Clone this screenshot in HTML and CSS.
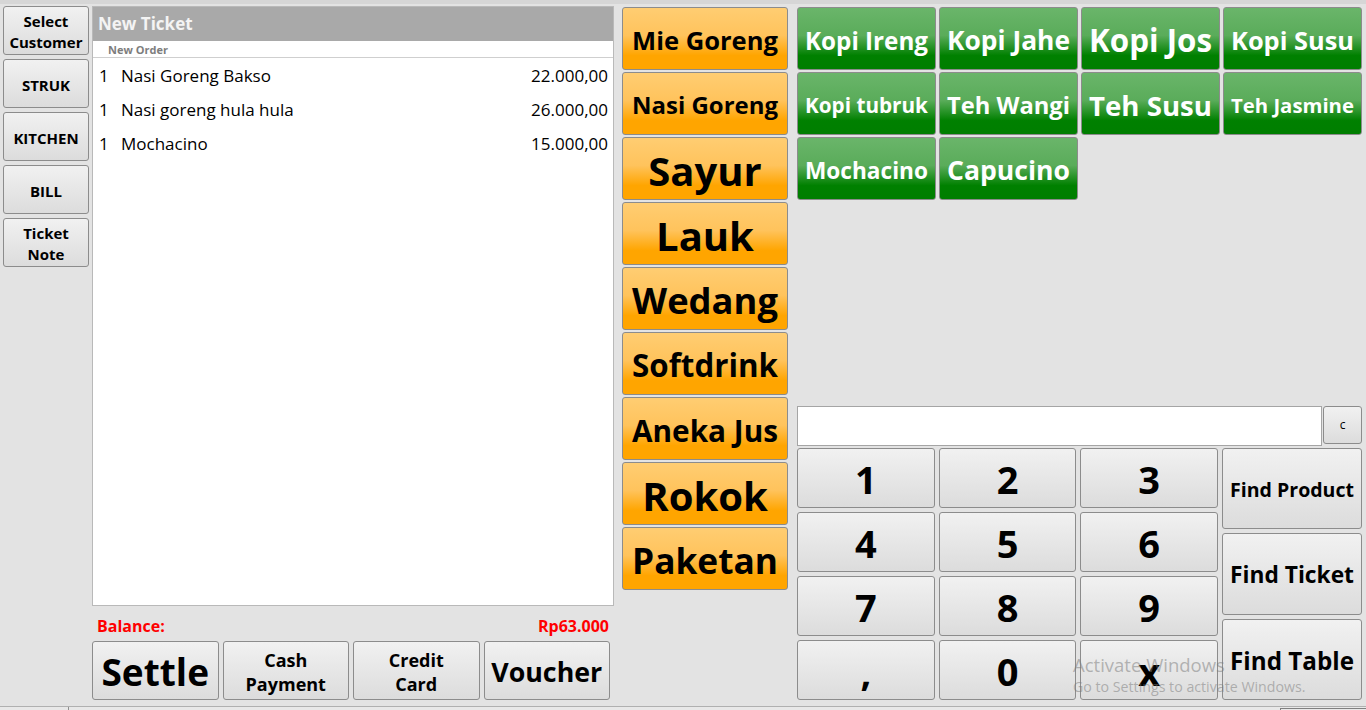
FILE: index.html
```html
<!DOCTYPE html>
<html lang="id">
<head>
<meta charset="utf-8">
<title>POS</title>
<link rel="stylesheet" href="styles.css">
</head>
<body>
<div class="topline"></div>
<div class="main">
  <aside class="side">
    <button class="btn side-btn">Select<br>Customer</button>
    <button class="btn side-btn">STRUK</button>
    <button class="btn side-btn">KITCHEN</button>
    <button class="btn side-btn">BILL</button>
    <button class="btn side-btn">Ticket<br>Note</button>
  </aside>

  <section class="ticket-col">
    <div class="ticket">
      <div class="ticket-head">New Ticket</div>
      <div class="ticket-sub">New Order</div>
      <ul class="lines">
        <li class="line"><span class="qty">1</span><span class="name">Nasi Goreng Bakso</span><span class="price">22.000,00</span></li>
        <li class="line"><span class="qty">1</span><span class="name">Nasi goreng hula hula</span><span class="price">26.000,00</span></li>
        <li class="line"><span class="qty">1</span><span class="name">Mochacino</span><span class="price">15.000,00</span></li>
      </ul>
    </div>
    <div class="balance"><span>Balance:</span><span>Rp63.000</span></div>
    <div class="pay">
      <button class="btn pay-btn pay-big"><span class="fit">Settle</span></button>
      <button class="btn pay-btn">Cash<br>Payment</button>
      <button class="btn pay-btn">Credit<br>Card</button>
      <button class="btn pay-btn pay-big"><span class="fit">Voucher</span></button>
    </div>
  </section>

  <nav class="cats">
    <button class="btn cat"><span class="fit">Mie Goreng</span></button>
    <button class="btn cat"><span class="fit">Nasi Goreng</span></button>
    <button class="btn cat"><span class="fit">Sayur</span></button>
    <button class="btn cat"><span class="fit">Lauk</span></button>
    <button class="btn cat"><span class="fit">Wedang</span></button>
    <button class="btn cat"><span class="fit">Softdrink</span></button>
    <button class="btn cat"><span class="fit">Aneka Jus</span></button>
    <button class="btn cat"><span class="fit">Rokok</span></button>
    <button class="btn cat"><span class="fit">Paketan</span></button>
  </nav>

  <section class="right">
    <div class="products">
      <button class="btn prod"><span class="fit">Kopi Ireng</span></button>
      <button class="btn prod"><span class="fit">Kopi Jahe</span></button>
      <button class="btn prod"><span class="fit">Kopi Jos</span></button>
      <button class="btn prod"><span class="fit">Kopi Susu</span></button>
      <button class="btn prod"><span class="fit">Kopi tubruk</span></button>
      <button class="btn prod"><span class="fit">Teh Wangi</span></button>
      <button class="btn prod"><span class="fit">Teh Susu</span></button>
      <button class="btn prod"><span class="fit">Teh Jasmine</span></button>
      <button class="btn prod"><span class="fit">Mochacino</span></button>
      <button class="btn prod"><span class="fit">Capucino</span></button>
    </div>
    <div class="entry">
      <div class="entry-field"></div>
      <button class="btn clear">c</button>
    </div>
    <div class="pad">
      <div class="digits">
        <button class="btn digit">1</button>
        <button class="btn digit">2</button>
        <button class="btn digit">3</button>
        <button class="btn digit">4</button>
        <button class="btn digit">5</button>
        <button class="btn digit">6</button>
        <button class="btn digit">7</button>
        <button class="btn digit">8</button>
        <button class="btn digit">9</button>
        <button class="btn digit">,</button>
        <button class="btn digit">0</button>
        <button class="btn digit">x</button>
      </div>
      <div class="finds">
        <button class="btn find"><span class="fit">Find Product</span></button>
        <button class="btn find"><span class="fit">Find Ticket</span></button>
        <button class="btn find"><span class="fit">Find Table</span></button>
      </div>
    </div>
  </section>
</div>
<div class="status"><div class="st-left"></div><div class="st-right"></div></div>

<div class="watermark">
  <div class="wm1">Activate Windows</div>
  <div class="wm2">Go to Settings to activate Windows.</div>
</div>
<script src="app.js"></script>
</body>
</html>
```

FILE: styles.css
```css
* { box-sizing: border-box; margin: 0; padding: 0; }
html, body { width: 1366px; height: 710px; overflow: hidden; }
body {
  background: #e3e3e3;
  font-family: "Open Sans", "Noto Sans", sans-serif;
  color: #000;
  position: relative;
}
.topline { height: 4px; background: #d6d6d6; }
.main { display: flex; height: 702px; padding: 2px 0 6px 0; }

.btn {
  font-family: inherit;
  color: #000;
  border: 1px solid #8c8c8c;
  border-radius: 3px;
  background: linear-gradient(#f1f1f1, #dcdcdc);
  display: flex;
  align-items: center;
  justify-content: center;
  text-align: center;
  font-weight: 700;
  line-height: 1.2;
  overflow: hidden;
  min-width: 0;
}
.fit { display: inline-block; white-space: nowrap; }

/* left column */
.side { width: 86px; margin: 0 3px; display: flex; flex-direction: column; gap: 4px; flex: none; }
.side-btn { height: 49px; font-size: 15px; line-height: 21px; padding-top: 3px; }

/* ticket */
.ticket-col { width: 522px; flex: none; display: flex; flex-direction: column; }
.ticket { flex: 1; background: #fff; border: 1px solid #b9b9b9; display: flex; flex-direction: column; }
.ticket-head { height: 34px; background: #a9a9a9; color: #f4f4f4; font-weight: 700; font-size: 17px; line-height: 34px; padding-left: 5px; }
.ticket-sub { height: 17px; border-bottom: 1px solid #cfcfcf; font-size: 11px; font-weight: 700; color: #7d7d7d; padding-left: 15px; line-height: 17px; }
.lines { list-style: none; }
.line { display: flex; height: 34px; align-items: center; font-size: 17px; padding: 0 5px 0 6px; }
.qty { width: 22px; }
.name { flex: 1; }
.balance { height: 35px; display: flex; justify-content: space-between; align-items: center; padding: 4px 5px 0 5px; color: #ff0000; font-weight: 700; font-size: 16px; }
.pay { height: 59px; display: flex; gap: 4px; padding-right: 4px; }
.pay-btn { flex: 1; padding: 2px 7px 0; font-size: 18px; line-height: 24px; }
.pay-big { font-size: 37px; }

/* categories */
.cats { width: 166px; flex: none; margin-left: 8px; padding-top: 1px; display: flex; flex-direction: column; gap: 2px; }
.cat {
  height: 63px; padding: 4px 9px 0; font-size: 40px;
  background: linear-gradient(#ffcd72 0%, #ffc35c 45%, #ffa500 78%, #ffa500 100%);
}

/* right */
.right { width: 565px; flex: none; margin-left: 9px; padding-top: 1px; display: flex; flex-direction: column; }
.products { display: grid; grid-template-columns: repeat(4, minmax(0, 1fr)); grid-auto-rows: 63px; gap: 2px 3px; }
.prod {
  padding: 4px 7px 0; font-size: 34px; color: #fff;
  background: linear-gradient(#6ab56a 0%, #5aac5a 45%, #008000 78%, #007e00 100%);
}
.entry { margin-top: auto; display: flex; height: 40px; margin-bottom: 2px; }
.entry-field { flex: 1; background: #fff; border: 1px solid #a5a5a5; }
.clear { width: 39px; height: 38px; flex: none; font-size: 12px; font-weight: 400; margin-left: 1px; }
.pad { display: flex; gap: 4px; height: 252px; }
.digits { width: 421px; flex: none; display: grid; grid-template-columns: repeat(3, minmax(0, 1fr)); grid-template-rows: repeat(4, minmax(0, 1fr)); gap: 4px; }
.digit { font-size: 38px; padding-top: 4px; }
.finds { width: 140px; flex: none; display: flex; flex-direction: column; gap: 4px; }
.find { flex: 1; padding: 2px 7px 0; font-size: 30px; }

/* status bar */
.status { height: 4px; display: flex; background: #e8e8e8; border-top: 1px solid #b0b0b0; }
.st-left { width: 69px; border-right: 1px solid #909090; }
.st-right { margin-left: auto; width: 86px; border-left: 1px solid #808080; border-top: 1px solid #808080; margin-top: 1px; }

/* OS watermark overlay */
.watermark { position: absolute; left: 1073px; top: 653px; color: rgba(120, 120, 120, 0.5); pointer-events: none; }
.wm1 { font-size: 18.5px; line-height: 24px; }
.wm2 { font-size: 14.2px; line-height: 20px; }
```

FILE: app.js
```js
function fitAll() {
  document.querySelectorAll('.fit').forEach(function (el) {
    var box = el.parentElement;
    var cs = getComputedStyle(box);
    var avail = box.clientWidth - parseFloat(cs.paddingLeft) - parseFloat(cs.paddingRight);
    var max = parseFloat(getComputedStyle(el).fontSize);
    var w = el.getBoundingClientRect().width;
    if (w > avail) {
      el.style.fontSize = (max * avail / w) + 'px';
    }
  });
}
if (document.fonts && document.fonts.ready) {
  document.fonts.ready.then(fitAll);
} else {
  fitAll();
}
```
